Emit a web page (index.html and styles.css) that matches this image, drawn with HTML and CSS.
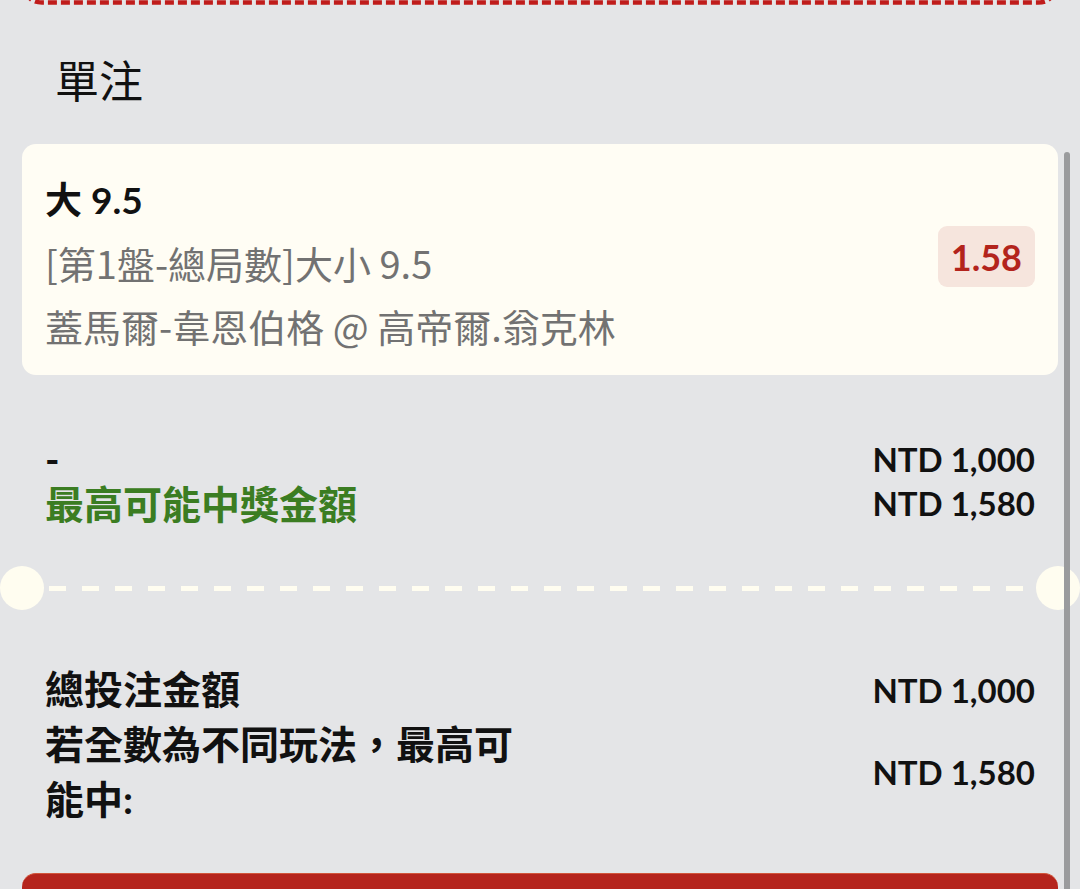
FILE: index.html
```html
<!DOCTYPE html>
<html lang="zh-Hant">
<head>
<meta charset="utf-8">
<title>單注</title>
<link rel="stylesheet" href="styles.css">
</head>
<body>
<div class="page">
  <svg class="top-edge" width="1080" height="6" viewBox="0 0 1080 6">
    <path d="M27 -8 Q29 2.5 42 2.5 H1038 Q1051 2.5 1053 -8" fill="none" stroke="#c01c1b" stroke-width="4.5" stroke-dasharray="9 4"/>
  </svg>
  <h2 class="section-title">單注</h2>

  <div class="bet-card">
    <div class="bet-info">
      <div class="bet-pick">大 9.5</div>
      <div class="bet-market">[第1盤-總局數]大小 9.5</div>
      <div class="bet-match">蓋馬爾-韋恩伯格 @ 高帝爾.翁克林</div>
    </div>
    <div class="odds">1.58</div>
  </div>

  <div class="stake-row">
    <div class="stake-left">
      <div class="stake-input">-</div>
      <div class="win-label">最高可能中獎金額</div>
    </div>
    <div class="stake-right">
      <div class="amount">NTD 1,000</div>
      <div class="amount">NTD 1,580</div>
    </div>
  </div>

  <div class="divider">
    <span class="notch"></span>
    <span class="dashes"></span>
    <span class="notch"></span>
  </div>

  <div class="totals">
    <div class="total-row">
      <div class="total-label">總投注金額</div>
      <div class="amount">NTD 1,000</div>
    </div>
    <div class="total-row">
      <div class="total-label">若全數為不同玩法，最高可能中:</div>
      <div class="amount">NTD 1,580</div>
    </div>
  </div>

  <button class="place-bet" type="button"></button>
</div>
<div class="scrollbar"></div>
</body>
</html>
```

FILE: styles.css
```css
html {
  overflow: hidden;
}

body {
  margin: 0;
  background: #e4e5e7;
  font-family: "Lato", "Noto Sans CJK TC", sans-serif;
  color: #111;
}

.page {
  width: 1080px;
  box-sizing: border-box;
  padding: 0 22px;
}

.top-edge {
  display: block;
  margin: 0 -22px;
}

.section-title {
  margin: 51px 0 0 0;
  padding-left: 33px;
  font-family: "Noto Sans CJK TC", sans-serif;
  font-size: 44px;
  font-weight: 400;
  line-height: 44px;
  color: #111;
}

.bet-card {
  margin-top: 43px;
  background: #fffdf4;
  border-radius: 14px;
  padding: 24px 23px 18px 23px;
  display: flex;
  align-items: center;
  justify-content: space-between;
}

.bet-info {
  display: flex;
  flex-direction: column;
}

.bet-pick {
  font-size: 37px;
  font-weight: 700;
  line-height: 63px;
  color: #111;
}

.bet-market,
.bet-match {
  font-family: "Noto Sans CJK TC", sans-serif;
  font-size: 38px;
  font-weight: 400;
  line-height: 63px;
  color: #727272;
}

.odds {
  height: 61px;
  padding: 0 13px;
  display: flex;
  align-items: center;
  background: #f6e5dd;
  border-radius: 9px;
  color: #b3241c;
  font-size: 36px;
  font-weight: 700;
  margin-top: -12px;
}

.stake-row {
  margin-top: 62px;
  display: flex;
  justify-content: space-between;
  align-items: flex-start;
}

.stake-input {
  font-size: 39px;
  font-weight: 700;
  line-height: 45px;
}

.win-label {
  font-size: 39px;
  font-weight: 700;
  line-height: 45px;
  color: #3b7d22;
}

.stake-right {
  padding-right: 23px;
  text-align: right;
}

.stake-right .amount {
  line-height: 44px;
}

.amount {
  font-family: "Lato", sans-serif;
  font-size: 33px;
  font-weight: 700;
  color: #111;
}

.stake-left {
  padding-left: 23px;
}

.divider {
  margin: 39px -22px 0 -22px;
  display: flex;
  align-items: center;
  gap: 5px;
}

.notch {
  flex: none;
  width: 44px;
  height: 44px;
  border-radius: 50%;
  background: #fffdf0;
}

.dashes {
  flex: 1;
  height: 5px;
  background: repeating-linear-gradient(to right, #fffdf0 0 17px, transparent 17px 33px);
}

.totals {
  margin-top: 52px;
  padding: 0 23px;
  display: flex;
  flex-direction: column;
}

.total-row {
  display: flex;
  justify-content: space-between;
  align-items: center;
}

.total-label {
  width: 480px;
  font-size: 39px;
  font-weight: 700;
  line-height: 55px;
}

.place-bet {
  display: block;
  width: 100%;
  height: 100px;
  margin-top: 46px;
  border: none;
  border-top: 1px solid #d2553a;
  border-radius: 14px;
  background: #b5241c;
}

.scrollbar {
  position: absolute;
  top: 152px;
  left: 1064px;
  width: 6px;
  height: 760px;
  border-radius: 3px;
  background: #9a9b9d;
}
```
